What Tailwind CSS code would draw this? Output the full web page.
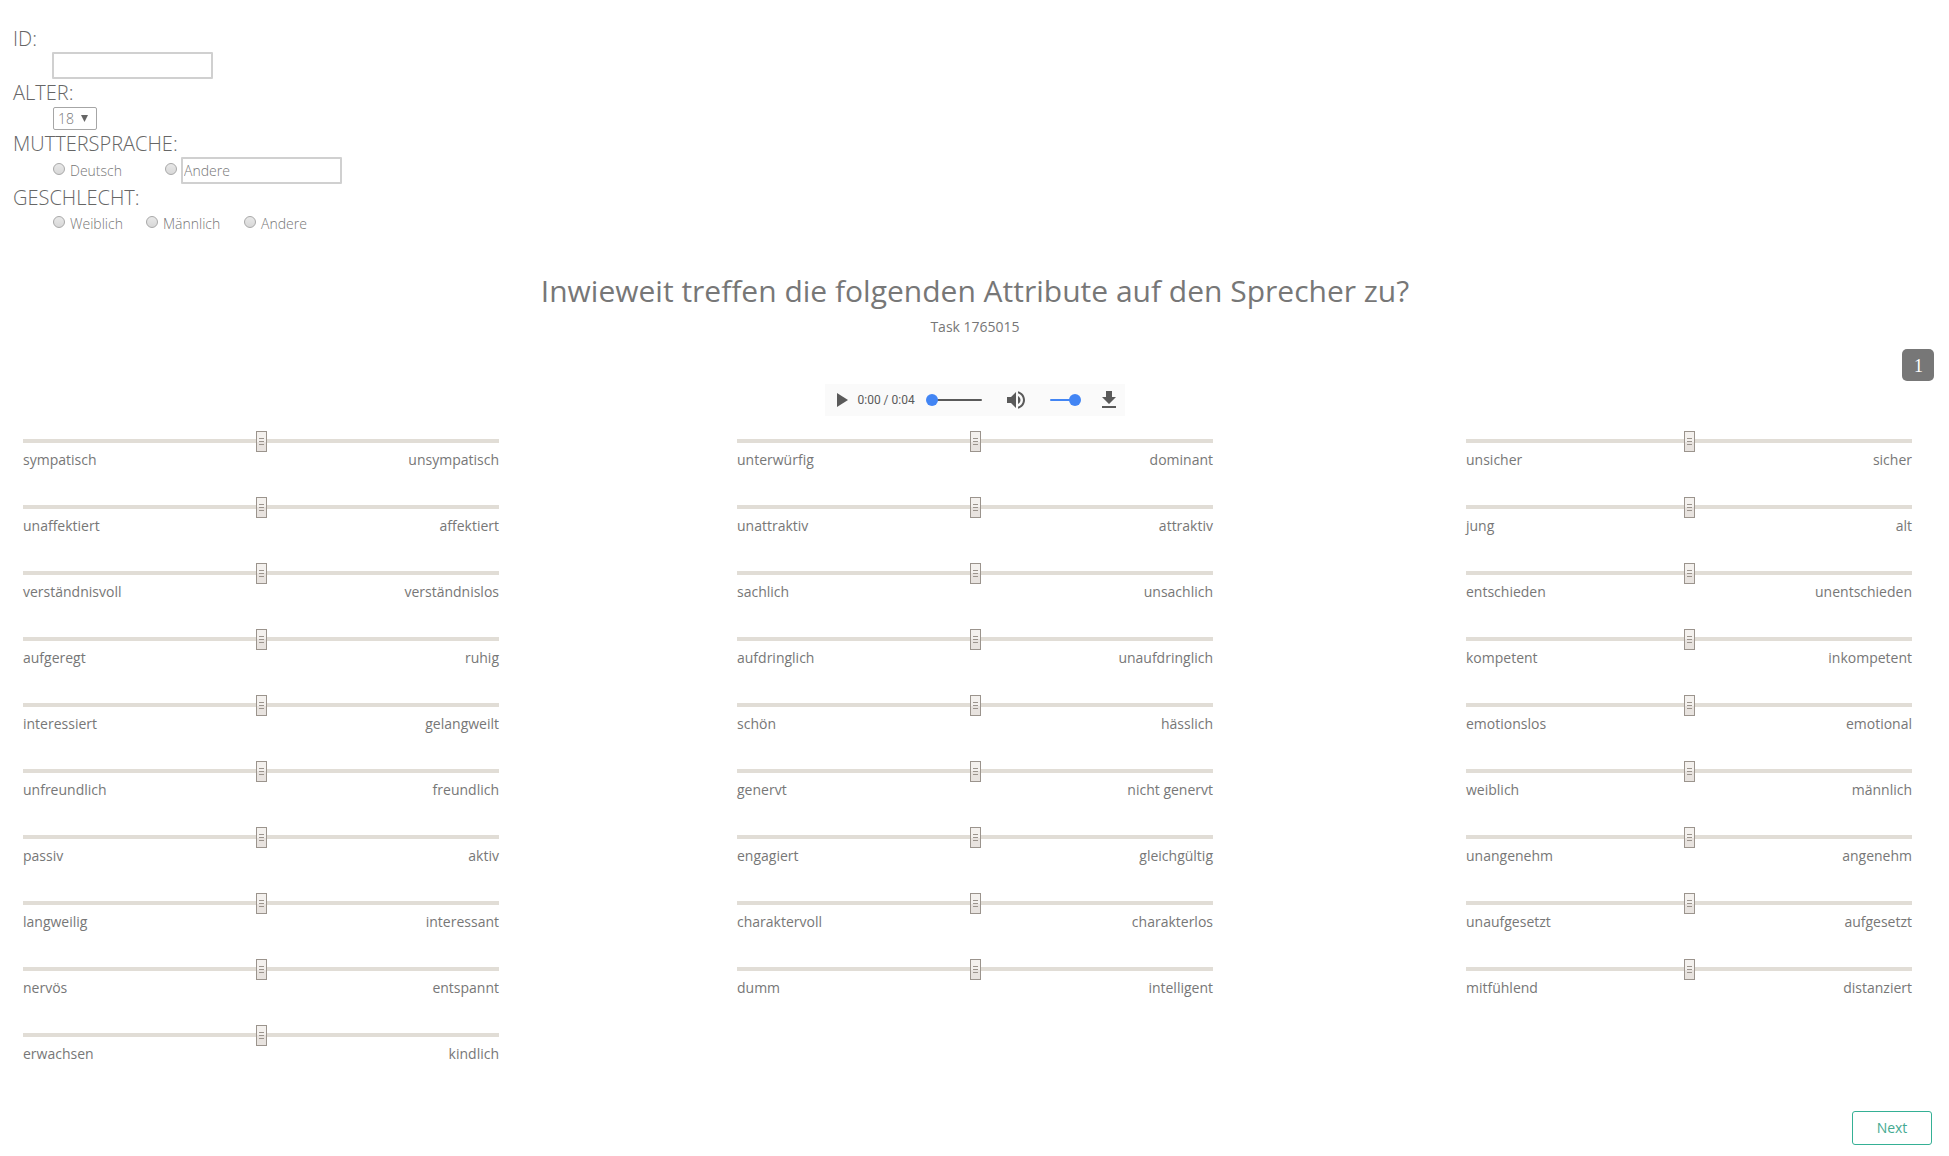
<!DOCTYPE html>
<html lang="de">
<head>
<meta charset="utf-8">
<title>Sprecherattribute</title>
<script src="https://cdn.jsdelivr.net/npm/@tailwindcss/browser@4"></script>
</head>
<body class="h-[1156px] overflow-hidden bg-white font-['Open_Sans',sans-serif] text-sm leading-5 text-[#777]">
<div class="flex h-full flex-col pt-6">
  <form class="flex h-[244px] flex-none flex-col pl-[13px] font-light">
    <label class="block h-7 text-xl leading-[30px] text-[#666]">ID:</label>
    <div class="h-[26px] pl-[39px]"><input class="block h-[27px] w-[161px] rounded-[1px] border-2 border-[#d0d0d0] bg-white px-px"></div>
    <label class="block h-7 text-xl leading-[30px] text-[#666]">ALTER:</label>
    <div class="h-[23px] pl-10 pt-px"><div class="flex h-[23px] w-11 items-center justify-between rounded-[2px] border border-[#a6a6a6] bg-white pl-1 pr-2 text-[#777]">18
      <svg class="h-[7px] w-[7px]" viewBox="0 0 7 7"><path d="M0 0h7L3.5 7z" fill="#666"/></svg></div></div>
    <label class="block h-7 text-xl leading-[30px] text-[#666]">MUTTERSPRACHE:</label>
    <div class="flex h-[26px] pl-10 text-[#777]">
      <label class="flex w-28 gap-[5px] pt-[4px]"><i class="mt-[2px] h-3 w-3 rounded-full border border-[#a8a8a8] bg-linear-to-b from-[#e8e8e8] to-[#d8d8d8]"></i>Deutsch</label>
      <i class="mt-[6px] h-3 w-3 rounded-full border border-[#a8a8a8] bg-linear-to-b from-[#e8e8e8] to-[#d8d8d8]"></i>
      <input class="ml-1 block h-[27px] w-[161px] rounded-[1px] border-2 border-[#d0d0d0] bg-white px-px" value="Andere">
    </div>
    <label class="block h-7 text-xl leading-[30px] text-[#666]">GESCHLECHT:</label>
    <div class="flex pl-10 pt-[3px] text-[#777]">
      <label class="flex w-[93px] gap-[5px]"><i class="mt-[2px] h-3 w-3 rounded-full border border-[#a8a8a8] bg-linear-to-b from-[#e8e8e8] to-[#d8d8d8]"></i>Weiblich</label>
      <label class="flex w-[98px] gap-[5px]"><i class="mt-[2px] h-3 w-3 rounded-full border border-[#a8a8a8] bg-linear-to-b from-[#e8e8e8] to-[#d8d8d8]"></i>Männlich</label>
      <label class="flex gap-[5px]"><i class="mt-[2px] h-3 w-3 rounded-full border border-[#a8a8a8] bg-linear-to-b from-[#e8e8e8] to-[#d8d8d8]"></i>Andere</label>
    </div>
  </form>

  <header class="flex h-[81px] flex-none flex-col items-center pl-px">
    <h1 class="h-[49px] text-[30px] leading-[46px]">Inwieweit treffen die folgenden Attribute auf den Sprecher zu?</h1>
    <p>Task 1765015</p>
  </header>

  <div class="flex h-8 flex-none justify-end pr-[15px]"><span class="flex h-8 w-8 items-center justify-center rounded-[5px] bg-[#777] pl-px pt-[2px] font-['Liberation_Serif',serif] text-[18px] text-white">1</span></div>

  <div class="mx-auto mt-[3px] flex h-8 w-[300px] flex-none items-center bg-[#fafafa] pl-1 font-['Roboto',sans-serif] text-xs text-[#5a5a5a]">
    <svg class="h-6 w-6" viewBox="0 0 24 24" fill="#5a5a5a"><path d="M8 5v14l11-7z"/></svg>
    <span class="ml-[5px] w-[68px] whitespace-nowrap">0:00 / 0:04</span>
    <svg class="h-3 w-14" viewBox="0 0 56 12"><path d="M6 6h49" stroke="#5a5a5a" stroke-width="2" stroke-linecap="round"/><circle cx="6" cy="6" r="6" fill="#4285f4"/></svg>
    <svg class="ml-[22px] h-6 w-6" viewBox="0 0 24 24" fill="#5a5a5a"><path d="M3 9v6h4l5 5V4L7 9H3zm13.5 3c0-1.77-1.02-3.29-2.5-4.03v8.05c1.48-.73 2.5-2.25 2.5-4.02zM14 3.23v2.06c2.89.86 5 3.54 5 6.71s-2.11 5.85-5 6.71v2.06c4.01-.91 7-4.49 7-8.77s-2.99-7.86-7-8.77z"/></svg>
    <svg class="ml-[22px] h-3 w-[31px]" viewBox="0 0 31 12"><path d="M1 6h24" stroke="#4285f4" stroke-width="2" stroke-linecap="round"/><circle cx="25" cy="6" r="6" fill="#4285f4"/></svg>
    <svg class="ml-4 h-6 w-6" viewBox="0 0 24 24" fill="#5a5a5a"><path d="M19 9h-4V3H9v6H5l7 7 7-7zM5 18v2h14v-2H5z"/></svg>
  </div>

  <main class="mt-[15px] flex h-[680px] flex-none pl-[23px]">
    <section class="w-[476px]" data-column="0"></section>
    <section class="ml-[238px] w-[476px]" data-column="1"></section>
    <section class="ml-[253px] w-[446px]" data-column="2"></section>
  </main>

  <div class="flex justify-end pr-[17px]"><button class="h-[34px] w-20 rounded-[3px] border border-[#35b095] bg-white text-sm text-[#45aa92]">Next</button></div>
</div>

<template id="slider">
  <div class="h-[66px]">
    <div class="grid h-[21px] items-center">
      <div class="col-start-1 row-start-1 mb-px h-1 bg-[#e1ddd6]"></div>
      <div class="z-10 col-start-1 row-start-1 mx-auto flex h-[21px] w-[11px] flex-col items-center justify-center gap-[2px] border border-[#9b948d] bg-linear-to-b from-[#f4f1ee] from-50% to-[#e8e3df] to-50%">
        <i class="h-px w-[5px] bg-[#9b948d]"></i><i class="h-px w-[5px] bg-[#9b948d]"></i><i class="h-px w-[5px] bg-[#9b948d]"></i>
      </div>
    </div>
    <div class="-mt-[2px] flex justify-between"><span></span><span></span></div>
  </div>
</template>
<script>
const scales = [
  ['sympatisch|unsympatisch','unaffektiert|affektiert','verständnisvoll|verständnislos','aufgeregt|ruhig','interessiert|gelangweilt','unfreundlich|freundlich','passiv|aktiv','langweilig|interessant','nervös|entspannt','erwachsen|kindlich'],
  ['unterwürfig|dominant','unattraktiv|attraktiv','sachlich|unsachlich','aufdringlich|unaufdringlich','schön|hässlich','genervt|nicht genervt','engagiert|gleichgültig','charaktervoll|charakterlos','dumm|intelligent'],
  ['unsicher|sicher','jung|alt','entschieden|unentschieden','kompetent|inkompetent','emotionslos|emotional','weiblich|männlich','unangenehm|angenehm','unaufgesetzt|aufgesetzt','mitfühlend|distanziert']
];
const template = document.getElementById('slider');
scales.forEach((items, c) => {
  const column = document.querySelector('[data-column="' + c + '"]');
  items.forEach(item => {
    const row = template.content.cloneNode(true);
    const labels = row.querySelectorAll('span');
    item.split('|').forEach((text, i) => labels[i].textContent = text);
    column.append(row);
  });
});
</script>
</body>
</html>
